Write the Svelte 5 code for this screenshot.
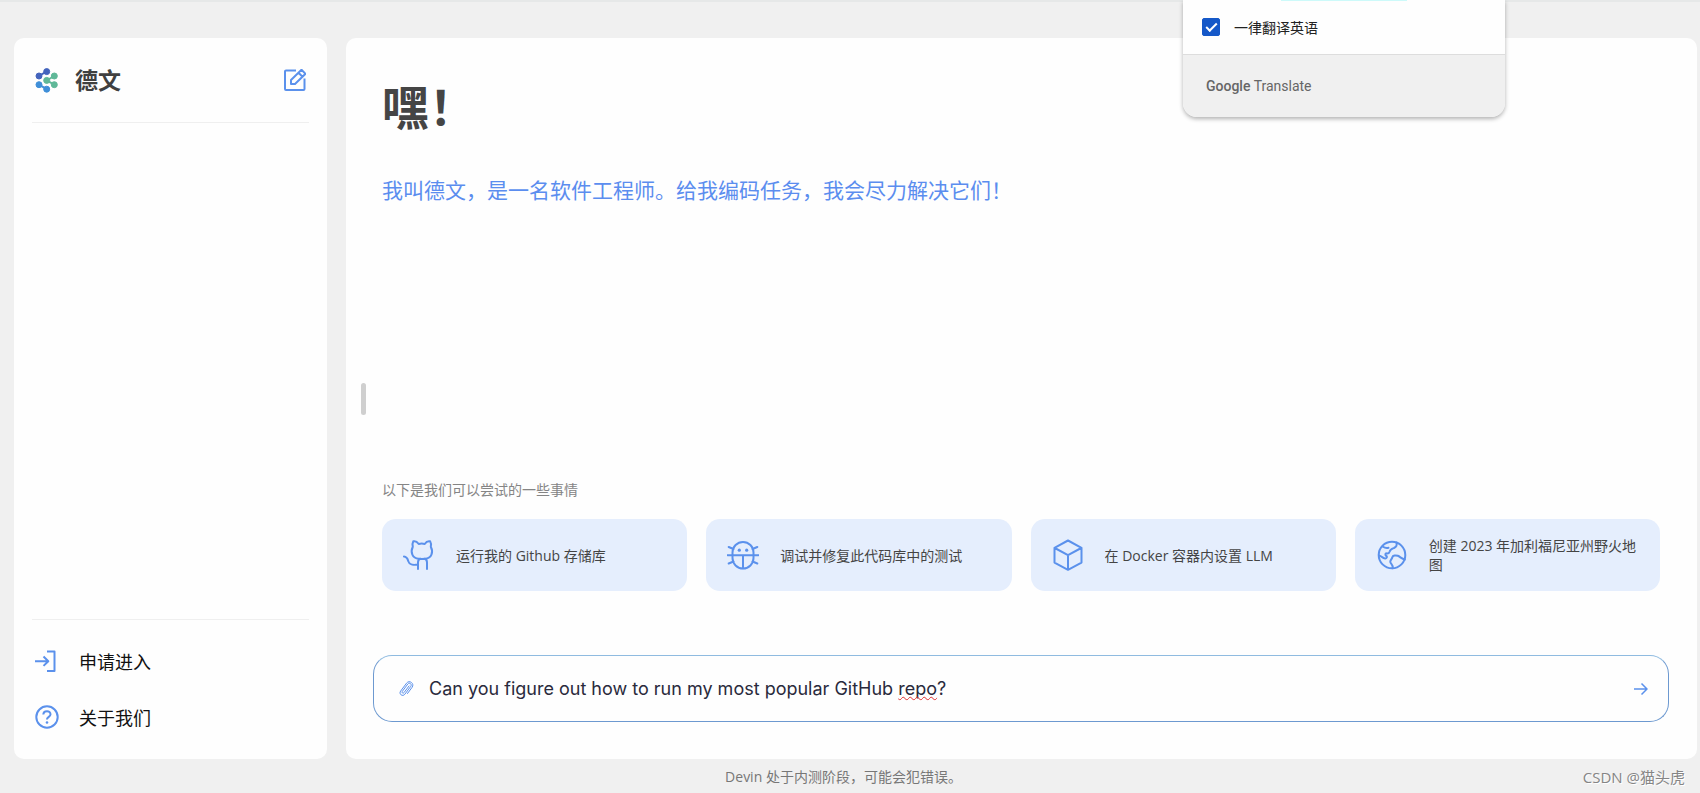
<script>
	let message = $state('Can you figure out how to run my most popular GitHub repo?');
	let alwaysTranslate = $state(true);

	const suggestions = [
		{ icon: 'cat', text: '运行我的 Github 存储库' },
		{ icon: 'bug', text: '调试并修复此代码库中的测试' },
		{ icon: 'cube', text: '在 Docker 容器内设置 LLM' },
		{ icon: 'globe', text: '创建 2023 年加利福尼亚州野火地图' }
	];

	// words the spell checker does not know
	const unknownWords = ['repo'];
	let words = $derived(message.split(/(\w+)/));
</script>

<div class="page">
	<aside class="sidebar">
		<header class="brand">
			<svg class="logo" viewBox="0 0 24 25" width="24" height="25" aria-hidden="true">
				<g fill="#4464bd" stroke="#4464bd">
					<path d="M4 8l7.7-4.7" stroke-width="2" />
					<circle cx="11.7" cy="3.6" r="3" />
					<circle cx="4" cy="8" r="3" />
				</g>
				<g fill="#5fb898" stroke="#5fb898">
					<path d="M19.3 8l-7.6 4.4 7.6 4.3" fill="none" stroke-width="2" />
					<circle cx="19.3" cy="8" r="3" />
					<circle cx="11.7" cy="12.4" r="3" />
					<circle cx="19.3" cy="16.7" r="3" />
				</g>
				<g fill="#3f8fd8" stroke="#3f8fd8">
					<path d="M4 16.7l7.7 4.5" stroke-width="2" />
					<circle cx="4" cy="16.7" r="3" />
					<circle cx="11.7" cy="21.2" r="3" />
				</g>
			</svg>
			<h2>德文</h2>
			<button class="icon-btn" aria-label="新建会话">
				<svg class="line" viewBox="0 0 22 22" width="22" height="22">
					<path d="M12 1.5H2a1 1 0 0 0-1 1V20a1 1 0 0 0 1 1h17.5a1 1 0 0 0 1-1V9.5" />
					<path d="M7 15v-4L17.5.8l4 4L11 15zM14.5 3.8l4 4" />
				</svg>
			</button>
		</header>

		<nav class="links">
			<a href="#apply">
				<svg class="line" viewBox="0 0 24 24" width="24" height="24">
					<path d="M12 2.5h7.5V22H12M0 12.2h13M8.5 7.5l4.8 4.7-4.8 4.7" />
				</svg>
				申请进入
			</a>
			<a href="#about">
				<svg class="line" viewBox="0 0 24 24" width="24" height="24">
					<circle cx="12" cy="12" r="10.7" />
					<path d="M8.3 9.5c.2-4.5 7.4-4.3 7.2 0-.1 2.2-3.6 2.6-3.6 5" />
					<circle class="dot" cx="12" cy="17.5" r="1.3" />
				</svg>
				关于我们
			</a>
		</nav>
	</aside>

	<main class="panel">
		<div class="handle"></div>
		<div class="content">
			<section class="intro">
				<h1>嘿！</h1>
				<p>我叫德文，是一名软件工程师。给我编码任务，我会尽力解决它们！</p>
			</section>

			<section class="ideas">
				<p>以下是我们可以尝试的一些事情</p>
				<div class="cards">
					{#each suggestions as s (s.icon)}
						<button class="card">
							<svg class="line bold" viewBox="0 0 32 32" width="32" height="32" aria-hidden="true">
								{#if s.icon === 'cat'}
									<path d="M10.3 2.3c1.6-.4 4 .7 5.4 2.7 1.8-.5 4.2-.5 6 0 1.3-2 3.8-3.1 5.4-2.7.9 1.5 1.2 3.5.7 5.5 2.8 5.4.8 11.5-5.6 12-2 .2-4.6.2-6.5 0-6.5-.5-8.5-6.6-5.9-12-.5-2-.3-4 .5-5.5z" />
									<path d="M15 30v-6.5c0-2 .8-3.3 2.3-3.7M24 30v-6.5c0-2-.8-3.3-2.3-3.7M.9 17.5c3.3.3 3.6 2 4.3 4.5.8 3 4.8 4.5 9.8 3.5" />
								{:else if s.icon === 'bug'}
									<rect x="5.5" y="3" width="21" height="26.5" rx="10.5" />
									<path d="M.5 16.2h31M16 16.2v13M6.5 10L1.7 8M25.5 10l4.8-2M6.5 22.5l-4.8 2M25.5 22.5l4.8 2" />
									<circle class="dot" cx="12.3" cy="11.2" r="1.6" />
									<circle class="dot" cx="19.7" cy="11.2" r="1.6" />
								{:else if s.icon === 'cube'}
									<path d="M16 1.5l13.5 7.3v14.8L16 30.8 2.5 23.6V8.8zM2.8 9L16 16.2 29.2 9M16 16.2v14.4" />
								{:else}
									<circle cx="16" cy="16" r="13.3" />
									<path d="M20.5 3.5c.8 3-.2 4.5-2.5 5.5-2.7 1-3.8 1.3-4.3 3.5-.5 1.8-1.5 2.1-3 1.9-1.7-.3-1.6 2-.4 2.6 1.3.7.3 2.8-1.5 2.4-2-.5-3.3-2.2-5.5-2.8M6.5 7.5c2 1.3 3.5 2.2 6 1.3" />
									<path d="M28.8 20.5c-3-.5-4.8-2.9-7-3.7-2-.7-5-.4-5.5 1.5-.4 1.9-2 2.5-2 4.5 0 2.3 2.9 2.4 2.4 6.4" />
								{/if}
							</svg>
							<span>{s.text}</span>
						</button>
					{/each}
				</div>
			</section>

			<form class="composer" onsubmit={(e) => e.preventDefault()}>
				<button type="button" class="icon-btn" aria-label="附加文件">
					<svg class="line clip" viewBox="0 0 16 18" width="16" height="18">
						<path d="M11 6l-5 6.6c-1 1.3-2.6 0-1.7-1.2L9.8 4c1.6-2 4.5.2 3 2.3l-6 8c-2.2 2.8-6.3-.3-4.2-3.2l6-8c2.8-3.6 8.2.5 5.5 4.2l-4.6 6.2" />
					</svg>
				</button>
				<div class="field">
					<input aria-label="消息" bind:value={message} spellcheck="false" />
					<div class="spelling" aria-hidden="true">
						{#each words as word}<span class:unknown={unknownWords.includes(word)}>{word}</span>{/each}
					</div>
				</div>
				<button class="icon-btn" aria-label="发送">
					<svg class="line send" viewBox="0 0 14 14" width="14" height="14">
						<path d="M0 7h13M7.5 1.5L13 7l-5.5 5.5" />
					</svg>
				</button>
			</form>
		</div>
	</main>

	<footer>
		<p class="notice">Devin 处于内测阶段，可能会犯错误。</p>
		<p class="watermark">CSDN @猫头虎</p>
	</footer>

	<!-- browser translate bubble, hanging in from above the page -->
	<div class="translate">
		<label>
			<input type="checkbox" bind:checked={alwaysTranslate} />
			一律翻译英语
		</label>
		<div class="credit"><b>Google</b> Translate</div>
	</div>
</div>

<style>
	:global(body) {
		background: #f0f0f0;
		font-family: 'Open Sans', 'Noto Sans CJK SC', sans-serif;
	}
	.page {
		box-sizing: border-box;
		position: relative;
		min-height: 100vh;
		padding: 36px 3px 0 14px;
		border-top: 2px solid #e6e8e8;
		display: grid;
		grid-template: 1fr 34px / 313px 1fr;
		column-gap: 19px;
	}
	h1, h2, p { margin: 0; }
	button { border: 0; padding: 0; background: none; font: inherit; cursor: pointer; }

	.line { display: block; flex: none; fill: none; stroke: #5b91ec; stroke-width: 2; stroke-linejoin: round; }
	.line.bold { stroke-linecap: round; }
	.line.clip { stroke-width: 1; stroke-linecap: round; }
	.line.send { stroke-width: 1.5; }
	.dot { fill: #5b91ec; stroke: none; }

	.sidebar, .panel { background: #fefefe; border-radius: 10px; }
	.sidebar {
		padding: 0 18px;
		display: flex;
		flex-direction: column;
		justify-content: space-between;
	}
	.brand {
		height: 84px;
		padding: 0 3px;
		display: flex;
		align-items: center;
		border-bottom: 1px solid #efefef;
	}
	.brand h2 { flex: 1; margin-left: 16px; font-size: 23px; line-height: 32px; color: #404040; }
	.links {
		padding: 13px 3px 14px;
		border-top: 1px solid #efefef;
	}
	.links a {
		display: flex;
		align-items: center;
		gap: 20px;
		height: 56px;
		font-size: 18px;
		color: #111;
		text-decoration: none;
	}

	.panel { display: flex; align-items: center; padding-left: 15px; }
	.handle { width: 5px; height: 32px; border-radius: 3px; background: #cfcfcf; }
	.content {
		box-sizing: border-box;
		flex: 1;
		align-self: stretch;
		display: flex;
		flex-direction: column;
		padding: 39px 28px 37px 7px;
	}
	.intro { padding-left: 9px; }
	h1 { font-size: 47px; line-height: 60px; color: #454545; }
	.intro p { margin-top: 37px; font-size: 21px; line-height: 32px; color: #5b8def; }
	.ideas { margin-top: auto; padding: 0 9px; }
	.ideas p { margin-bottom: 19px; font-size: 14px; line-height: 20px; color: #858585; }
	.cards { display: grid; grid-template-columns: repeat(4, 1fr); gap: 19px; }
	.card {
		display: flex;
		align-items: center;
		gap: 21px;
		height: 72px;
		padding: 0 21px;
		border-radius: 14px;
		background: #e5eefd;
		color: #444;
		font-size: 14px;
		line-height: 19px;
		text-align: left;
	}

	.composer {
		box-sizing: border-box;
		display: flex;
		align-items: center;
		height: 67px;
		margin-top: 64px;
		padding: 0 20px 0 24px;
		border: 1px solid #6d99d0;
		border-top-color: #8fbbe0;
		border-radius: 19px;
	}
	.field {
		position: relative;
		flex: 1;
		margin-left: 15px;
		font-family: Inter, 'Noto Sans CJK SC', sans-serif;
		font-size: 18px;
		line-height: 28px;
	}
	.field input {
		display: block;
		width: 100%;
		height: 28px;
		padding: 0;
		border: 0;
		outline: 0;
		background: none;
		font: inherit;
		color: #2a2a3c;
	}
	/* same text metrics as the input, only the squiggles are painted */
	.spelling { position: absolute; inset: 0; color: transparent; white-space: pre; pointer-events: none; }
	.unknown { text-decoration: underline wavy #e03030 1px; text-decoration-skip-ink: none; }

	footer {
		grid-column: 1 / -1;
		display: grid;
		grid-template-columns: 1fr auto 1fr;
		align-items: center;
	}
	.notice { grid-column: 2; padding-right: 24px; font-size: 14px; color: #777; }
	.watermark {
		justify-self: end;
		padding-right: 12px;
		font-size: 15px;
		color: #858585;
		text-shadow: 1px 1px 0 #fff;
	}

	.translate {
		position: absolute;
		top: -2px;
		right: 195px;
		width: 322px;
		border-radius: 0 0 14px 14px;
		background: #fefefe;
		box-shadow: 0 2px 4px rgba(0, 0, 0, 0.3);
		overflow: hidden;
	}
	.translate label {
		display: flex;
		align-items: center;
		gap: 14px;
		height: 54px;
		padding-left: 19px;
		font-size: 14px;
		color: #222;
		/* lower edge of the bubble's highlighted tab */
		background: linear-gradient(#cdfafa, #cdfafa) 98px 0 / 126px 1px no-repeat;
	}
	.translate input {
		appearance: none;
		width: 18px;
		height: 18px;
		margin: 0;
		border: 1px solid #1558c8;
		border-radius: 2px;
		display: grid;
		place-items: center;
	}
	.translate input:checked { background: #1558c8; }
	.translate input:checked::after {
		content: '';
		width: 11px;
		height: 6px;
		margin-bottom: 3px;
		border: solid #fff;
		border-width: 0 0 2px 2px;
		box-sizing: border-box;
		rotate: -45deg;
	}
	.credit {
		height: 62px;
		padding-left: 23px;
		border-top: 1px solid #ddd;
		background: #f0f0f0;
		font: 14px/62px Roboto, sans-serif;
		color: #666;
	}
	.credit b { font-weight: 500; }
</style>
